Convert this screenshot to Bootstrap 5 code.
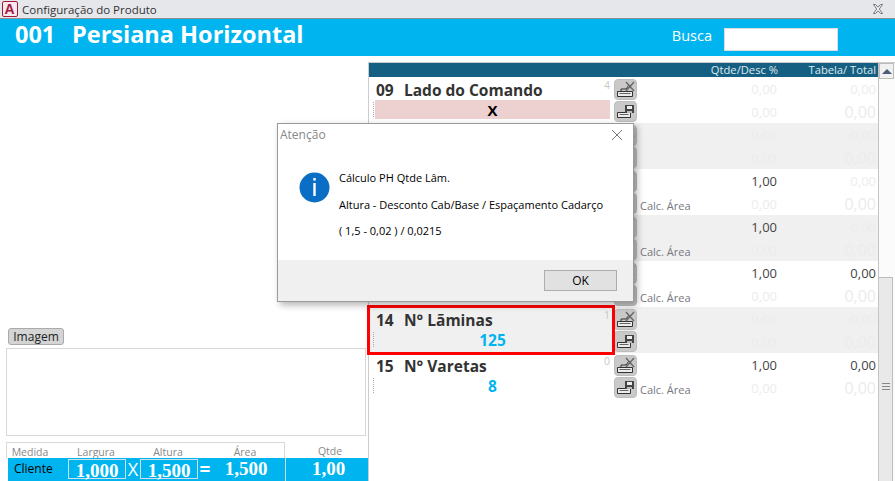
<!DOCTYPE html>
<html lang="pt-BR">
<head>
<meta charset="utf-8">
<title>Configuração do Produto</title>
<link href="https://cdn.jsdelivr.net/npm/bootstrap@5.3.0/dist/css/bootstrap.min.css" rel="stylesheet">
<style>
html,body{height:481px;overflow:hidden;background:#fff;font-family:"Open Sans","Noto Sans",sans-serif;color:#333}
.app{width:895px;height:481px;position:relative;overflow:hidden}
.winbar{height:19px;background:#e6e7eb;border-bottom:1px solid #8f8f8f;font-size:11.5px;line-height:17px;color:#333;padding-left:2px}
.appicon{width:16px;height:16px;margin:0 4px 0 0;flex:none}
.appicon text{font-family:"Liberation Sans",sans-serif;font-weight:700;font-size:14px;fill:#a4173f}
.winclose{width:12px;height:10px;margin-right:11px}
.head{height:37px;background:#00b5ef;color:#fff;padding-left:15px}
.head-title{font-size:23.5px;font-weight:700;line-height:30px;white-space:pre;margin-top:-8px}
.head-code{display:inline-block;width:57px}
.head-busca{font-size:14.500px;margin-right:12px;margin-top:-3px}
.head-input{width:114px;height:23px;background:#fff;border:1px solid #ddd;margin-right:57px;margin-top:4px}
.main{height:425px}
.leftpane{width:368px;padding-left:6px;flex:none}
.imgbtn{font-size:12px;line-height:14px;padding:1px 4px;margin-left:2px;margin-bottom:3px;background:#d4d4d4;border:1px solid #aaa;border-radius:3px;color:#222;width:56px;height:17px}
.imgbox{width:360px;height:88px;border:1px solid #d8d8d8;margin-bottom:6px}
.meas-top{height:16px;font-size:10.5px;color:#888;line-height:18px}
.meas-box{width:279px;border:1px solid #d8d8d8;border-bottom:0}
.meas-q{width:83px;text-align:center;padding-left:7px}
.mh-1{width:46px;text-align:center}
.mh-2{width:86px;text-align:center}
.mh-3{width:58px;text-align:center}
.mh-4{width:87px;text-align:center;padding-left:9px}
.meas-row{height:23px;margin-left:2px;background:#00b5ef;color:#fff;font-family:"Liberation Serif",serif;font-weight:700;font-size:19px;line-height:22px}
.meas-name{width:60px;padding-left:6px;font-family:"Open Sans",sans-serif;font-weight:400;font-size:12px;color:#000}
.meas-in{width:58px;height:20px;border:1px solid #cfe0e8;text-align:center;margin-top:1px;line-height:22px}
.meas-op{width:14px;text-align:center;font-family:"Open Sans",sans-serif;font-weight:400;font-size:18px}
.meas-op.eq{font-weight:700;font-size:19px}
.meas-area{width:73px;text-align:center;padding-right:5px}
.meas-qty{width:83px;text-align:center;border-left:1px solid #d8d8d8;padding-left:3px}
.rightpane{margin-top:6px;width:527px;border-top:1px solid #ccc;border-left:1px solid #ccc}
.grid-wrap{width:509px;flex:none}
.grid-head{height:14px;background:#156082;color:#dfe9ee;font-size:11.200px;line-height:13px;padding-right:2px}
.gh-q{width:100px;text-align:right}
.gh-t{width:98px;text-align:right}
.cfg-row{height:46px}
.cfg-row.alt{background:#f0f0f0}
.cfg-main{width:244px;flex:none;padding:0 3px 0 6px;position:relative}
.cfg-name{font-size:15.500px;font-weight:700;color:#333;line-height:27px;height:23px;white-space:pre;padding-left:1px}
.cfg-no{display:inline-block;width:28px}
.cfg-count{position:absolute;right:3px;top:1px;font-size:10.5px;color:#c9c9c9;line-height:14px}
.cfg-val{height:19px;line-height:21px;text-align:center;font-size:15.500px;font-weight:700;color:#00b5ef;position:relative}
.cfg-val.neg{background:#edd0d0;color:#000;font-size:15px}
.cfg-val::before{content:"";position:absolute;left:-2px;top:2px;height:15px;border-left:1px dotted #aaa}
.sel{outline:3px solid #f00;outline-offset:-1px}
.cfg-btns{width:23px;flex:none;margin-left:1px;padding-top:2px;gap:1px}
.tool{width:23px;height:21px;background:#c9c9c9;border:1px solid #bdbdbd;border-radius:4px;display:flex;align-items:center;justify-content:center;padding:0}
.tool svg{width:19px;height:17px}
.cfg-vals{flex:1;min-width:0;display:grid;grid-template-columns:minmax(0,1fr) 100px 99px;grid-template-rows:23px 23px;font-size:13px;line-height:23px;padding:1px 2px 0 0}
.v{text-align:right;color:#ececec}
.v.on{color:#444}
.v.big{font-size:16px}
.calc{grid-row:2;grid-column:1;padding-left:3px;color:#77777f;font-size:11px;line-height:25px;white-space:nowrap}
.sbar{width:17px;background:#fbfbfb;border-left:1px solid #c4c4c4;position:relative}
.sb-up{height:16px;width:15px;border:1px solid #bbb;background:#f1f1f1;display:flex;align-items:center;justify-content:center}
.sb-tri{width:0;height:0;border-left:5px solid transparent;border-right:5px solid transparent;border-bottom:5px solid #4a5a78}
.sb-spacer{height:198px}
.sb-thumb{width:14px;height:218px;background:#e9e9e9;border:1px solid #bcbcbc;border-left:0;display:flex;align-items:center;justify-content:center;padding-left:1px}
.grip{width:8px;height:7px;border-top:1px solid #888;border-bottom:1px solid #888;position:relative}
.grip::after{content:"";position:absolute;left:0;right:0;top:2px;border-top:1px solid #888}
.dlg{position:absolute;left:277px;top:123px;width:357px;height:179px;border:1px solid #9a9a9a;border-radius:0;box-shadow:3px 3px 7px rgba(0,0,0,.3);background:#fff;color:#000}
.dlg-head{height:22px;padding:0 9px 0 2px;border:0;font-size:12px;color:#888;line-height:22px}
.dlg-x{width:14px;height:14px}
.dlg-body{height:114px;padding:25px 0 0 21px;gap:9px;font-size:11px}
.dlg-info{width:31px;height:31px;flex:none;margin-top:1px}
.dlg-info circle{fill:#0a6fc4}
.dlg-line{height:26.5px;line-height:13px;white-space:nowrap}
.dlg-foot{height:41px;background:#f0f0f0;padding:10px 16px 0 0;flex-grow:1}
.dlg-ok{width:73px;height:21px;background:#e1e1e1;border:1px solid #adadad;border-radius:0;font-size:12px;line-height:18px;padding:0;color:#000}
</style>
</head>
<body>
<svg width="0" height="0" class="position-absolute">
  <symbol id="tray-x" viewBox="0 0 19 17">
    <path d="M1.500 10.500h15v5h-15z" fill="#ececec" stroke="#333"/>
    <path d="M3.500 12.500h11" stroke="#666"/>
    <path d="M5 10V8h5l3-4" fill="none" stroke="#333"/>
    <path d="M10 1l8 9M18 1l-8 9" stroke="#666" stroke-width="1.400"/>
  </symbol>
  <symbol id="tray-disk" viewBox="0 0 19 17">
    <path d="M1.500 9.500h13v5h-13z" fill="#ececec" stroke="#333"/>
    <path d="M3.500 11.500h9" stroke="#666"/>
    <rect x="9" y="2" width="9" height="8" fill="#444"/>
    <rect x="11" y="3" width="5" height="3" fill="#eee"/>
    <rect x="11" y="8" width="5" height="2" fill="#bbb"/>
  </symbol>
</svg>
<div class="app d-flex flex-column">
  <div class="winbar d-flex align-items-center">
    <svg class="appicon" viewBox="0 0 16 16"><rect x=".5" y=".5" width="15" height="15" rx="1.5" fill="#f7e9ee" stroke="#a4173f"/><text x="2.6" y="13.4">A</text></svg>
    <span class="flex-grow-1">Configuração do Produto</span>
    <svg class="winclose" viewBox="0 0 12 10"><path d="M1.500 .5h2L6 3.200 8.500 .5h2L7.300 5l3.200 4.500h-2L6 6.800 3.500 9.500h-2L4.700 5z" fill="#f4f4f4" stroke="#666" stroke-width=".9"/></svg>
  </div>
  <div class="head d-flex align-items-center">
    <div class="head-title flex-grow-1"><span class="head-code">001</span>Persiana Horizontal</div>
    <div class="head-busca">Busca</div>
    <div class="head-input"></div>
  </div>
  <div class="main d-flex">
    <div class="leftpane d-flex flex-column justify-content-end">
      <button class="btn imgbtn" type="button">Imagem</button>
      <div class="imgbox"></div>
      <div class="d-flex meas-top">
        <div class="meas-box d-flex">
          <div class="mh-1">Medida</div>
          <div class="mh-2">Largura</div>
          <div class="mh-3">Altura</div>
          <div class="mh-4">Área</div>
        </div>
        <div class="meas-q">Qtde</div>
      </div>
      <div class="meas-row d-flex">
        <div class="meas-name">Cliente</div>
        <div class="meas-in">1,000</div>
        <div class="meas-op">X</div>
        <div class="meas-in">1,500</div>
        <div class="meas-op eq">=</div>
        <div class="meas-area">1,500</div>
        <div class="meas-qty">1,00</div>
      </div>
    </div>
    <div class="rightpane d-flex">
      <div class="grid-wrap">
        <div class="grid-head d-flex justify-content-end">
          <div class="gh-q">Qtde/Desc %</div>
          <div class="gh-t">Tabela/ Total</div>
        </div>

        <div class="cfg-row d-flex">
          <div class="cfg-main"><div class="cfg-name"><span class="cfg-no">09</span>Lado do Comando</div><span class="cfg-count">4</span><div class="cfg-val neg">X</div></div>
          <div class="cfg-btns d-flex flex-column"><button class="tool" type="button" aria-label="Limpar"><svg><use href="#tray-x"/></svg></button><button class="tool" type="button" aria-label="Salvar"><svg><use href="#tray-disk"/></svg></button></div>
          <div class="cfg-vals"><div class="v" style="grid-column:2">0,00</div><div class="v">0,00</div><div class="v" style="grid-column:2">0,00</div><div class="v big">0,00</div></div>
        </div>

        <div class="cfg-row alt d-flex">
          <div class="cfg-main"></div>
          <div class="cfg-btns d-flex flex-column"><button class="tool" type="button" aria-label="Limpar"><svg><use href="#tray-x"/></svg></button><button class="tool" type="button" aria-label="Salvar"><svg><use href="#tray-disk"/></svg></button></div>
          <div class="cfg-vals"><div class="v" style="grid-column:2">0,00</div><div class="v">0,00</div><div class="v" style="grid-column:2">0,00</div><div class="v big">0,00</div></div>
        </div>

        <div class="cfg-row d-flex">
          <div class="cfg-main"></div>
          <div class="cfg-btns d-flex flex-column"><button class="tool" type="button" aria-label="Limpar"><svg><use href="#tray-x"/></svg></button><button class="tool" type="button" aria-label="Salvar"><svg><use href="#tray-disk"/></svg></button></div>
          <div class="cfg-vals"><div class="v on" style="grid-column:2">1,00</div><div class="v">0,00</div><div class="calc">Calc. Área</div><div class="v" style="grid-column:2">0,00</div><div class="v big">0,00</div></div>
        </div>

        <div class="cfg-row alt d-flex">
          <div class="cfg-main"></div>
          <div class="cfg-btns d-flex flex-column"><button class="tool" type="button" aria-label="Limpar"><svg><use href="#tray-x"/></svg></button><button class="tool" type="button" aria-label="Salvar"><svg><use href="#tray-disk"/></svg></button></div>
          <div class="cfg-vals"><div class="v on" style="grid-column:2">1,00</div><div class="v">0,00</div><div class="calc">Calc. Área</div><div class="v" style="grid-column:2">0,00</div><div class="v big">0,00</div></div>
        </div>

        <div class="cfg-row d-flex">
          <div class="cfg-main"></div>
          <div class="cfg-btns d-flex flex-column"><button class="tool" type="button" aria-label="Limpar"><svg><use href="#tray-x"/></svg></button><button class="tool" type="button" aria-label="Salvar"><svg><use href="#tray-disk"/></svg></button></div>
          <div class="cfg-vals"><div class="v on" style="grid-column:2">1,00</div><div class="v on">0,00</div><div class="calc">Calc. Área</div><div class="v" style="grid-column:2">0,00</div><div class="v big">0,00</div></div>
        </div>

        <div class="cfg-row alt d-flex">
          <div class="cfg-main sel"><div class="cfg-name"><span class="cfg-no">14</span>N° Lãminas</div><span class="cfg-count">1</span><div class="cfg-val">125</div></div>
          <div class="cfg-btns d-flex flex-column"><button class="tool" type="button" aria-label="Limpar"><svg><use href="#tray-x"/></svg></button><button class="tool" type="button" aria-label="Salvar"><svg><use href="#tray-disk"/></svg></button></div>
          <div class="cfg-vals"><div class="v" style="grid-column:2">0,00</div><div class="v">0,00</div><div class="v" style="grid-column:2">0,00</div><div class="v big">0,00</div></div>
        </div>

        <div class="cfg-row d-flex">
          <div class="cfg-main"><div class="cfg-name"><span class="cfg-no">15</span>N° Varetas</div><span class="cfg-count">0</span><div class="cfg-val">8</div></div>
          <div class="cfg-btns d-flex flex-column"><button class="tool" type="button" aria-label="Limpar"><svg><use href="#tray-x"/></svg></button><button class="tool" type="button" aria-label="Salvar"><svg><use href="#tray-disk"/></svg></button></div>
          <div class="cfg-vals"><div class="v on" style="grid-column:2">1,00</div><div class="v on">0,00</div><div class="calc">Calc. Área</div><div class="v" style="grid-column:2">0,00</div><div class="v big">0,00</div></div>
        </div>
      </div>
      <div class="sbar">
        <div class="sb-up"><span class="sb-tri"></span></div>
        <div class="sb-spacer"></div>
        <div class="sb-thumb"><span class="grip"></span></div>
      </div>
    </div>
  </div>

  <div class="dlg modal-content">
    <div class="dlg-head d-flex justify-content-between align-items-center">
      <span>Atenção</span>
      <svg class="dlg-x" viewBox="0 0 14 14"><path d="M2 2l10 10M12 2L2 12" stroke="#777" stroke-width="1" fill="none"/></svg>
    </div>
    <div class="dlg-body d-flex">
      <svg class="dlg-info" viewBox="0 0 31 31"><circle cx="15.500" cy="15.500" r="15"/><rect x="14.300" y="6" width="2.400" height="2.600" fill="#fff"/><rect x="14.300" y="11" width="2.400" height="13" fill="#fff"/></svg>
      <div>
        <div class="dlg-line">Cálculo PH Qtde Lâm.</div>
        <div class="dlg-line">Altura - Desconto Cab/Base / Espaçamento Cadarço</div>
        <div class="dlg-line">( 1,5 - 0,02 ) / 0,0215</div>
      </div>
    </div>
    <div class="dlg-foot d-flex justify-content-end">
      <button class="btn dlg-ok" type="button">OK</button>
    </div>
  </div>
</div>
<script src="https://cdn.jsdelivr.net/npm/bootstrap@5.3.0/dist/js/bootstrap.bundle.min.js"></script>
</body>
</html>
